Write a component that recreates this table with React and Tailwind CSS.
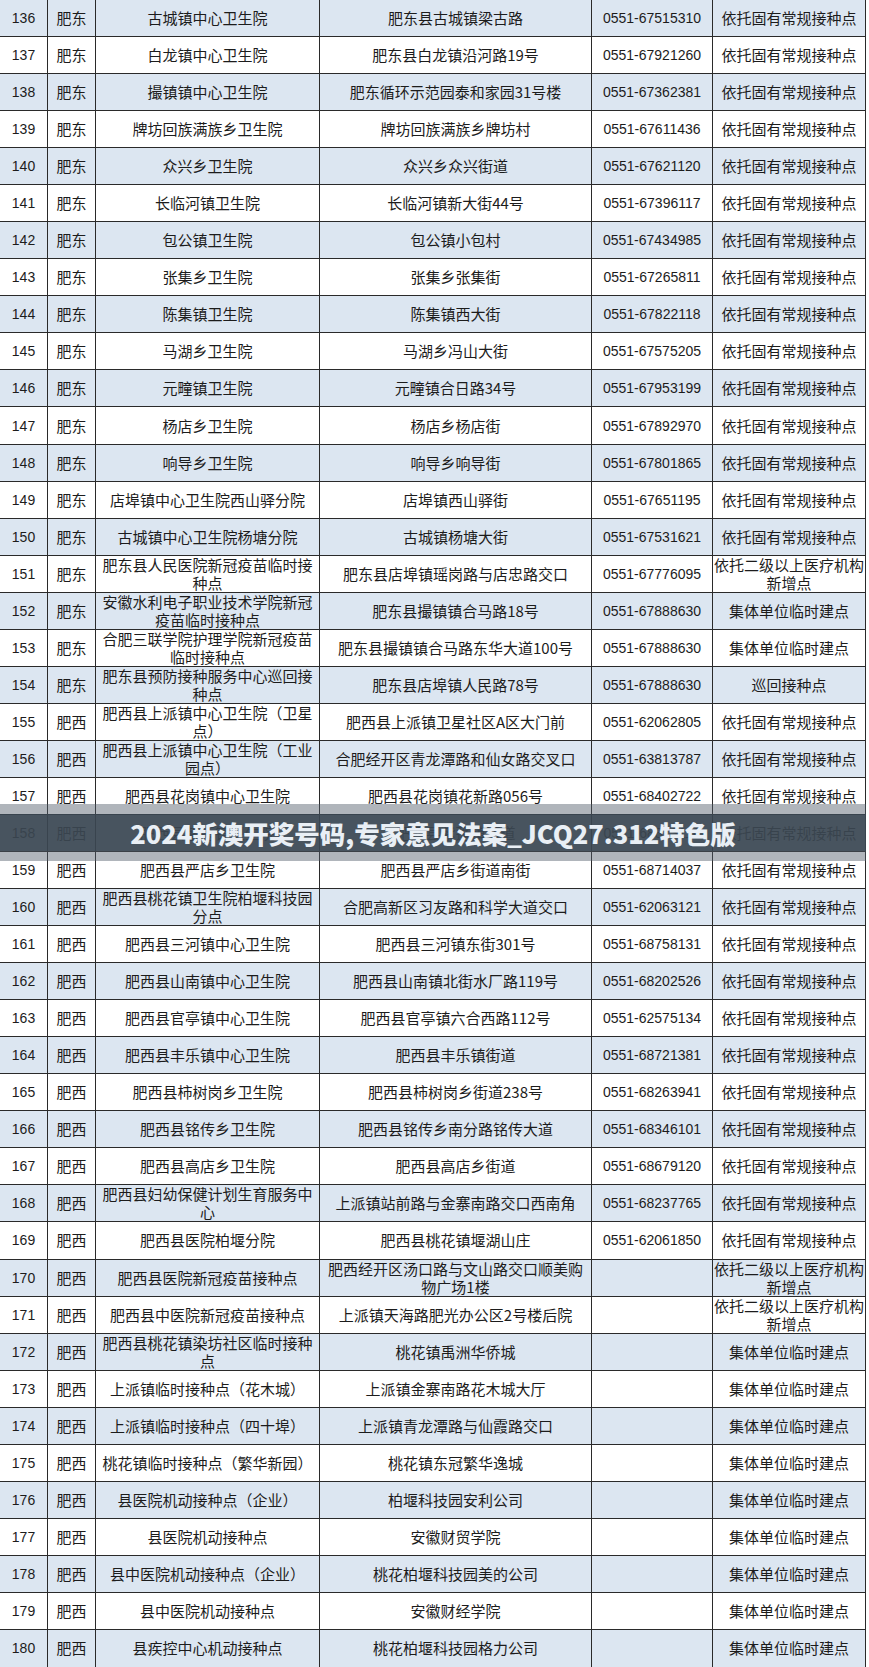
import React from "react";

const rows = [
  [136, "肥东", "古城镇中心卫生院", "肥东县古城镇梁古路", "0551-67515310", "依托固有常规接种点"],
  [137, "肥东", "白龙镇中心卫生院", "肥东县白龙镇沿河路19号", "0551-67921260", "依托固有常规接种点"],
  [138, "肥东", "撮镇镇中心卫生院", "肥东循环示范园泰和家园31号楼", "0551-67362381", "依托固有常规接种点"],
  [139, "肥东", "牌坊回族满族乡卫生院", "牌坊回族满族乡牌坊村", "0551-67611436", "依托固有常规接种点"],
  [140, "肥东", "众兴乡卫生院", "众兴乡众兴街道", "0551-67621120", "依托固有常规接种点"],
  [141, "肥东", "长临河镇卫生院", "长临河镇新大街44号", "0551-67396117", "依托固有常规接种点"],
  [142, "肥东", "包公镇卫生院", "包公镇小包村", "0551-67434985", "依托固有常规接种点"],
  [143, "肥东", "张集乡卫生院", "张集乡张集街", "0551-67265811", "依托固有常规接种点"],
  [144, "肥东", "陈集镇卫生院", "陈集镇西大街", "0551-67822118", "依托固有常规接种点"],
  [145, "肥东", "马湖乡卫生院", "马湖乡冯山大街", "0551-67575205", "依托固有常规接种点"],
  [146, "肥东", "元疃镇卫生院", "元疃镇合日路34号", "0551-67953199", "依托固有常规接种点"],
  [147, "肥东", "杨店乡卫生院", "杨店乡杨店街", "0551-67892970", "依托固有常规接种点"],
  [148, "肥东", "响导乡卫生院", "响导乡响导街", "0551-67801865", "依托固有常规接种点"],
  [149, "肥东", "店埠镇中心卫生院西山驿分院", "店埠镇西山驿街", "0551-67651195", "依托固有常规接种点"],
  [150, "肥东", "古城镇中心卫生院杨塘分院", "古城镇杨塘大街", "0551-67531621", "依托固有常规接种点"],
  [151, "肥东", "肥东县人民医院新冠疫苗临时接\n种点", "肥东县店埠镇瑶岗路与店忠路交口", "0551-67776095", "依托二级以上医疗机构\n新增点"],
  [152, "肥东", "安徽水利电子职业技术学院新冠\n疫苗临时接种点", "肥东县撮镇镇合马路18号", "0551-67888630", "集体单位临时建点"],
  [153, "肥东", "合肥三联学院护理学院新冠疫苗\n临时接种点", "肥东县撮镇镇合马路东华大道100号", "0551-67888630", "集体单位临时建点"],
  [154, "肥东", "肥东县预防接种服务中心巡回接\n种点", "肥东县店埠镇人民路78号", "0551-67888630", "巡回接种点"],
  [155, "肥西", "肥西县上派镇中心卫生院（卫星\n点）", "肥西县上派镇卫星社区A区大门前", "0551-62062805", "依托固有常规接种点"],
  [156, "肥西", "肥西县上派镇中心卫生院（工业\n园点）", "合肥经开区青龙潭路和仙女路交叉口", "0551-63813787", "依托固有常规接种点"],
  [157, "肥西", "肥西县花岗镇中心卫生院", "肥西县花岗镇花新路056号", "0551-68402722", "依托固有常规接种点"],
  [158, "肥西", "肥西县紫蓬镇卫生院", "肥西县紫蓬镇街道", "0551-68813116", "依托固有常规接种点"],
  [159, "肥西", "肥西县严店乡卫生院", "肥西县严店乡街道南街", "0551-68714037", "依托固有常规接种点"],
  [160, "肥西", "肥西县桃花镇卫生院柏堰科技园\n分点", "合肥高新区习友路和科学大道交口", "0551-62063121", "依托固有常规接种点"],
  [161, "肥西", "肥西县三河镇中心卫生院", "肥西县三河镇东街301号", "0551-68758131", "依托固有常规接种点"],
  [162, "肥西", "肥西县山南镇中心卫生院", "肥西县山南镇北街水厂路119号", "0551-68202526", "依托固有常规接种点"],
  [163, "肥西", "肥西县官亭镇中心卫生院", "肥西县官亭镇六合西路112号", "0551-62575134", "依托固有常规接种点"],
  [164, "肥西", "肥西县丰乐镇中心卫生院", "肥西县丰乐镇街道", "0551-68721381", "依托固有常规接种点"],
  [165, "肥西", "肥西县柿树岗乡卫生院", "肥西县柿树岗乡街道238号", "0551-68263941", "依托固有常规接种点"],
  [166, "肥西", "肥西县铭传乡卫生院", "肥西县铭传乡南分路铭传大道", "0551-68346101", "依托固有常规接种点"],
  [167, "肥西", "肥西县高店乡卫生院", "肥西县高店乡街道", "0551-68679120", "依托固有常规接种点"],
  [168, "肥西", "肥西县妇幼保健计划生育服务中\n心", "上派镇站前路与金寨南路交口西南角", "0551-68237765", "依托固有常规接种点"],
  [169, "肥西", "肥西县医院柏堰分院", "肥西县桃花镇堰湖山庄", "0551-62061850", "依托固有常规接种点"],
  [170, "肥西", "肥西县医院新冠疫苗接种点", "肥西经开区汤口路与文山路交口顺美购\n物广场1楼", "", "依托二级以上医疗机构\n新增点"],
  [171, "肥西", "肥西县中医院新冠疫苗接种点", "上派镇天海路肥光办公区2号楼后院", "", "依托二级以上医疗机构\n新增点"],
  [172, "肥西", "肥西县桃花镇染坊社区临时接种\n点", "桃花镇禹洲华侨城", "", "集体单位临时建点"],
  [173, "肥西", "上派镇临时接种点（花木城）", "上派镇金寨南路花木城大厅", "", "集体单位临时建点"],
  [174, "肥西", "上派镇临时接种点（四十埠）", "上派镇青龙潭路与仙霞路交口", "", "集体单位临时建点"],
  [175, "肥西", "桃花镇临时接种点（繁华新园）", "桃花镇东冠繁华逸城", "", "集体单位临时建点"],
  [176, "肥西", "县医院机动接种点（企业）", "柏堰科技园安利公司", "", "集体单位临时建点"],
  [177, "肥西", "县医院机动接种点", "安徽财贸学院", "", "集体单位临时建点"],
  [178, "肥西", "县中医院机动接种点（企业）", "桃花柏堰科技园美的公司", "", "集体单位临时建点"],
  [179, "肥西", "县中医院机动接种点", "安徽财经学院", "", "集体单位临时建点"],
  [180, "肥西", "县疾控中心机动接种点", "桃花柏堰科技园格力公司", "", "集体单位临时建点"],
];

const cjk = { fontFamily: '"Noto Sans CJK SC", "Noto Sans", sans-serif' };
const num = { fontFamily: '"Liberation Sans", "Noto Sans CJK SC", sans-serif' };

function Cell({ children, mono }) {
  return (
    <div
      className={
        "flex h-full min-h-0 items-center justify-center border-r border-[#2a2a2a] px-0 text-center leading-[18px] whitespace-pre-line text-[#1c1c1c] " +
        (mono ? "text-[14px]" : "text-[15px]")
      }
      style={mono ? num : cjk}
    >
      {children}
    </div>
  );
}

export default function App() {
  return (
    <div className="relative h-[1667px] w-[869px] overflow-hidden bg-white">
      <div className="grid h-[1667px] w-[866px] grid-rows-[repeat(45,minmax(0,1fr))]">
        {rows.map((r, i) => (
          <div
            key={r[0]}
            className={
              "grid min-h-0 grid-cols-[48px_48px_224px_272px_121px_153px] grid-rows-[minmax(0,1fr)] " +
              (i % 2 === 0 ? "bg-[#dce6f1] " : "bg-white ") +
              (i === rows.length - 1 ? "" : "border-b border-[#2a2a2a]")
            }
          >
            <Cell mono>{r[0]}</Cell>
            <Cell>{r[1]}</Cell>
            <Cell>{r[2]}</Cell>
            <Cell>{r[3]}</Cell>
            <Cell mono>{r[4]}</Cell>
            <Cell>{r[5]}</Cell>
          </div>
        ))}
      </div>
      <div className="absolute left-0 top-[804px] flex h-[57px] w-[866px] items-center bg-[#505c68]/45">
        <div className="flex h-[37px] w-full items-center justify-center bg-[#3a4550]/85">
          <span
            className="text-[25.5px] font-black leading-none text-[#e9eff5]"
            style={{ fontFamily: '"Noto Sans CJK SC", "Noto Sans", sans-serif' }}
          >
            2024新澳开奖号码,专家意见法案_JCQ27.312特色版
          </span>
        </div>
      </div>
    </div>
  );
}
